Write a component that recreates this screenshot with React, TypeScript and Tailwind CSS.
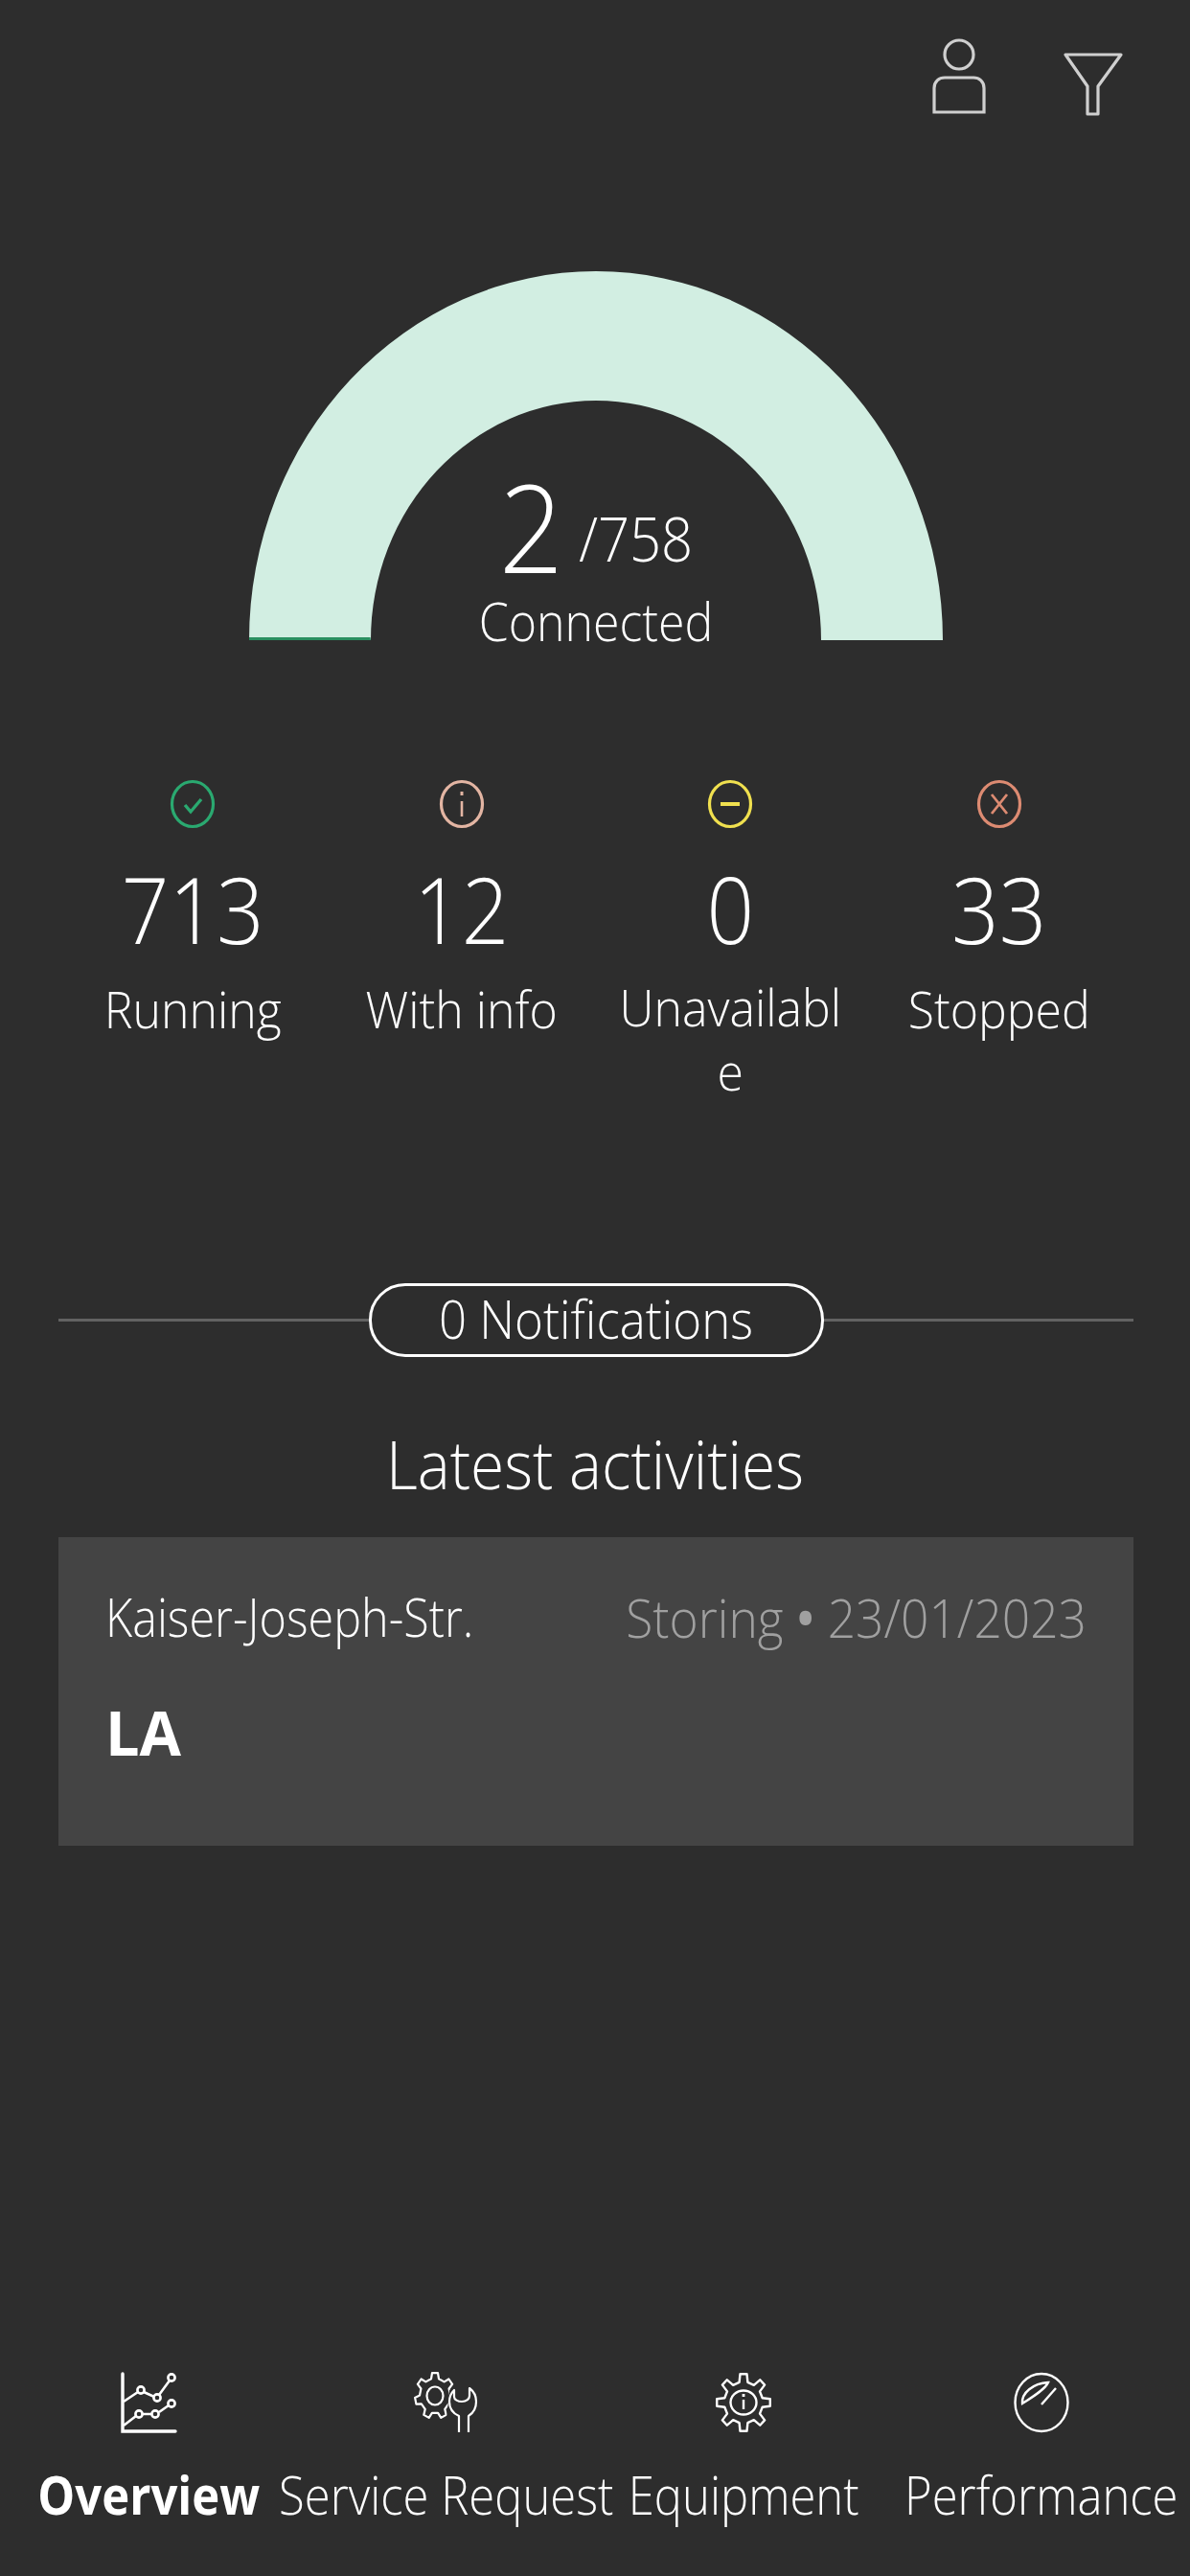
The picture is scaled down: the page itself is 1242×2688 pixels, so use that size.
const stats = [
  { n: "713", l: "Running", c: "#2aa970", i: "check" },
  { n: "12", l: "With info", c: "#e3b5a3", i: "info" },
  { n: "0", l: "Unavailable", c: "#f0e04f", i: "minus" },
  { n: "33", l: "Stopped", c: "#dd8b72", i: "x" },
];

function gearPath(cx: number, cy: number, rx: number, ry: number, teeth: number, inner: number, phase: number) {
  const pts: string[] = [];
  const step = (Math.PI * 2) / teeth;
  for (let t = 0; t < teeth; t++) {
    const a = t * step + phase;
    const list: [number, number][] = [
      [a - step * 0.28, inner],
      [a - step * 0.16, 1],
      [a + step * 0.16, 1],
      [a + step * 0.28, inner],
    ];
    for (const [ang, r] of list) {
      pts.push(`${(cx + Math.cos(ang) * rx * r).toFixed(1)} ${(cy + Math.sin(ang) * ry * r).toFixed(1)}`);
    }
  }
  return "M" + pts.join("L") + "Z";
}

function StatusIcon({ c, i }: { c: string; i: string }) {
  return (
    <svg width="50" height="54" viewBox="0 0 50 54" fill="none" stroke={c} strokeWidth="3.2">
      <ellipse cx="25" cy="27" rx="21.5" ry="23.5" />
      {i === "check" && <path d="M17 28l6 7 11-13" strokeWidth="3.4" />}
      {i === "info" && (
        <>
          <path d="M25 24v16" strokeWidth="2.6" />
          <path d="M25 14v4" strokeWidth="3" />
        </>
      )}
      {i === "minus" && <path d="M15 27h20" strokeWidth="4" />}
      {i === "x" && <path d="M17 17l16 20M33 17L17 37" strokeWidth="2.8" />}
    </svg>
  );
}

function NavIcon({ i }: { i: number }) {
  if (i === 0)
    return (
      <svg width="60" height="64" viewBox="0 0 60 64" fill="none" stroke="#fff" strokeWidth="2.6">
        <path d="M3 2v60h55" strokeWidth="3.4" strokeLinecap="round" />
        <path d="M4 31l15-10M25 21l11 5M41 24l11-15" />
        <path d="M4 56l13-10M24 44h9M41 42l10-7" />
        <circle cx="22" cy="19" r="3.6" />
        <circle cx="39" cy="27" r="3.6" />
        <circle cx="54" cy="6" r="3.6" />
        <circle cx="20" cy="44" r="3.6" />
        <circle cx="37" cy="44" r="3.6" />
        <circle cx="54" cy="33" r="3.6" />
      </svg>
    );
  if (i === 1)
    return (
      <svg width="67" height="64" viewBox="0 0 67 64" fill="none" stroke="#fff" strokeWidth="2.2" strokeLinejoin="round">
        <defs>
          <clipPath id="gear-cut">
            <path d="M0 0H50V10L37 19L34 50V64H0Z" />
          </clipPath>
        </defs>
        <path clipPath="url(#gear-cut)" d={gearPath(22, 25, 21, 24, 7, 0.76, -Math.PI / 2)} />
        <ellipse cx="22" cy="25" rx="8.5" ry="9.5" />
        <path d="M47 63V46C40 43 37 37 37 31C37 26 39 22 42 19V26C42 29 46 31 50 31C55 31 58 28 58 25V17C62 20 65 25 65 31C65 37 62 43 57 46V63" />
      </svg>
    );
  if (i === 2)
    return (
      <svg width="60" height="64" viewBox="0 0 60 64" fill="none" stroke="#fff" strokeWidth="2.4" strokeLinejoin="round">
        <path d={gearPath(30, 32, 28, 30, 8, 0.72, -Math.PI / 2)} />
        <ellipse cx="30" cy="32" rx="13.5" ry="12.5" />
        <path d="M30 29v10" strokeWidth="2.4" />
        <path d="M30 23v3" strokeWidth="2.8" />
      </svg>
    );
  return (
    <svg width="60" height="64" viewBox="0 0 60 64" fill="none" stroke="#fff" strokeWidth="2.4">
      <ellipse cx="30" cy="32" rx="27.5" ry="30" />
      <path d="M10 33C9 22 21 12 37 11C34 18 21 26 10 33Z" />
      <path d="M45 17L30 34" />
    </svg>
  );
}

export default function App() {
  return (
    <div className="flex h-[2688px] w-[1242px] flex-col overflow-hidden bg-[#2d2d2d] font-['Open_Sans',sans-serif] font-light text-white">
      <header className="flex justify-end gap-[79px] pr-[69px] pt-[40px]">
        <svg width="58" height="80" viewBox="0 0 58 80" fill="none" stroke="#cfcfcf" strokeWidth="3.2">
          <circle cx="29" cy="17" r="15" />
          <path d="M3 77V52c0-7 5-11 11-11h30c6 0 11 4 11 11v25z" />
        </svg>
        <svg width="64" height="68" viewBox="0 0 64 68" fill="none" stroke="#cfcfcf" strokeWidth="3.2" strokeLinejoin="round" className="mt-[14px]">
          <path d="M3 3h58L37 36v29H26V36z" />
        </svg>
      </header>

      <div className="relative ml-[259px] mt-[161px] h-[386px] w-[726px]">
        <svg width="726" height="386" viewBox="0 0 726 386" className="block">
          <path d="M1 385A362 385 0 0 1 725 385H598A235 250 0 0 0 128 385Z" fill="#d2eee2" />
          <path d="M1 382H127.500L128 385H1Z" fill="#2a8f60" />
        </svg>
        <div className="absolute inset-x-0 top-[211px] flex flex-col items-center">
          <div className="flex items-baseline gap-[16px]">
            <span className="scale-y-[1.08] text-[118px] leading-[110px]">2</span>
            <span className="-translate-y-[10px] scale-y-[1.1] text-[58px] leading-[60px]">/758</span>
          </div>
          <span className="mt-[19px] scale-y-[1.12] text-[50px] leading-[50px]">Connected</span>
        </div>
      </div>

      <div className="mt-[143px] grid grid-cols-4 pl-[61px] pr-[59px]">
        {stats.map((s) => (
          <div key={s.n} className="flex flex-col items-center">
            <StatusIcon c={s.c} i={s.i} />
            <div className="mt-[27px] scale-y-[1.1] text-[87px] leading-[110px]">{s.n}</div>
            <div className="mt-[19px] w-[232px] scale-y-[1.06] text-center text-[50px] leading-[63px] break-all">{s.l}</div>
          </div>
        ))}
      </div>

      <div className="ml-[61px] mr-[59px] mt-[191px] flex items-center">
        <div className="h-[3px] flex-1 bg-[#626262]" />
        <div className="flex h-[77px] w-[475px] items-center justify-center rounded-[38px] border-[3px] border-white pb-[5px]">
          <span className="scale-y-[1.1] text-[51px] leading-[60px]">0 Notifications</span>
        </div>
        <div className="h-[3px] flex-1 bg-[#626262]" />
      </div>

      <div className="mt-[69px] scale-y-[1.09] text-center text-[64px] leading-[86px]">Latest activities</div>

      <div className="ml-[61px] mr-[59px] mt-[33px] h-[322px] bg-[#444444] px-[49px] pt-[48px]">
        <div className="flex items-center justify-between leading-[70px]">
          <span className="scale-y-[1.12] text-[48.5px]">Kaiser-Joseph-Str.</span>
          <span className="scale-y-[1.08] text-[51.5px] text-[#a0a0a0]">Storing <span className="font-semibold">•</span> 23/01/2023</span>
        </div>
        <div className="mt-[50px] scale-y-[1.03] text-[63px] font-bold leading-[70px]">LA</div>
      </div>

      <nav className="mt-auto grid grid-cols-4 pb-[50px]">
        {["Overview", "Service Request", "Equipment", "Performance"].map((t, i) => (
          <div key={t} className="flex flex-col items-center">
            <div className="flex h-[76px] items-center"><NavIcon i={i} /></div>
            <span className={`mt-[23px] scale-y-[1.12] whitespace-nowrap text-[49px] leading-[70px] ${i === 0 ? "font-bold" : ""}`}>{t}</span>
          </div>
        ))}
      </nav>
    </div>
  );
}
